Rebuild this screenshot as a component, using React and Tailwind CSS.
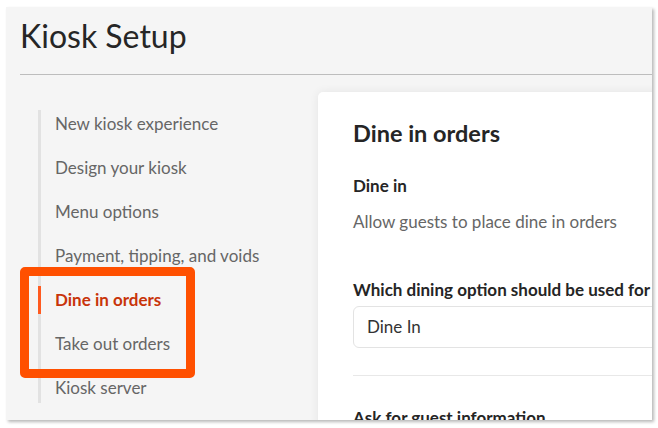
export default function App() {
  const items = [
    "New kiosk experience",
    "Design your kiosk",
    "Menu options",
    "Payment, tipping, and voids",
    "Dine in orders",
    "Take out orders",
    "Kiosk server",
  ];
  const active = "Dine in orders";

  return (
    <div className="w-[658px] h-[428px] bg-white pt-[7px] pl-[6px] font-['Lato',sans-serif]">
      <div className="relative w-[646px] h-[413px] overflow-hidden bg-[#f5f5f5] shadow-[2px_2px_3px_rgba(0,0,0,0.28)]">
        <div className="pl-[14px] pt-[10px]">
          <h1 className="text-[32px] leading-[38px] text-[#262626] font-normal">
            Kiosk Setup
          </h1>
          <div className="mt-[19px] h-px bg-[#bdbdbd]" />
        </div>

        <div className="flex mt-[17px]">
          <div className="w-[312px] shrink-0 pl-[32px] pt-[18px]">
            <ul className="flex flex-col border-l-[3px] border-[#e2e2e2]">
              {items.map((item) => (
                <li
                  key={item}
                  className={
                    item === active
                      ? "relative h-[44px] shrink-0 flex items-center pl-[14px] text-[17px] font-bold text-[#c8340a]"
                      : "h-[44px] shrink-0 flex items-center pl-[14px] text-[17px] text-[#666666] first:-mt-[8px] last:-mb-[7px]"
                  }
                >
                  {item === active && (
                    <span className="absolute left-[-3px] top-[8px] w-[3px] h-[28px] bg-[#ff5a1f]" />
                  )}
                  {item}
                </li>
              ))}
            </ul>
          </div>

          <div className="flex-1 bg-white rounded-tl-[5px] shadow-[0_0_10px_rgba(0,0,0,0.07)] pl-[35px] pt-[25px] h-[340px] border-r border-[#d8d8d8]">
            <h2 className="text-[23.5px] leading-[32px] font-bold text-[#252525]">Dine in orders</h2>
            <div className="mt-[27px] text-[17px] font-bold text-[#252525] leading-[20px]">Dine in</div>
            <div className="mt-[16px] text-[17px] text-[#666666] leading-[20px]">
              Allow guests to place dine in orders
            </div>
            <div className="mt-[48px] text-[17px] font-bold text-[#252525] leading-[20px] whitespace-nowrap">
              Which dining option should be used for dine in orders?
            </div>
            <div className="mt-[6px] h-[42px] border border-[#e3e3e3] rounded-[6px] flex items-center pl-[13px] text-[17px] text-[#333333]">
              Dine In
            </div>
            <div className="mt-[27px] h-px bg-[#e8e8e8]" />
            <div className="mt-[32px] text-[17px] font-bold text-[#252525] leading-[20px]">
              Ask for guest information
            </div>
          </div>
        </div>

        <div className="absolute left-[14px] top-[260px] w-[175px] h-[111px] border-[9px] border-[#ff5000] rounded-[5px]" />
      </div>
    </div>
  );
}
